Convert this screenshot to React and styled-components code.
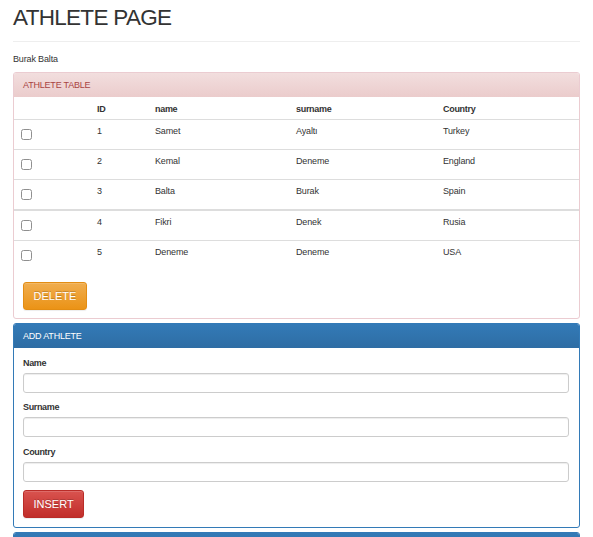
import styled, { createGlobalStyle } from "styled-components";

const GlobalStyle = createGlobalStyle`
  * {
    box-sizing: border-box;
  }
  body {
    margin: 0;
    background: #fff;
    color: #333;
    font-family: "Liberation Sans", Arial, Helvetica, sans-serif;
    font-size: 9px;
    line-height: 13.4px;
    letter-spacing: -0.15px;
  }
`;

const athletes = [
  { id: 1, name: "Samet", surname: "Ayaltı", country: "Turkey" },
  { id: 2, name: "Kemal", surname: "Deneme", country: "England" },
  { id: 3, name: "Balta", surname: "Burak", country: "Spain" },
  { id: 4, name: "Fikri", surname: "Denek", country: "Rusia", thick: true },
  { id: 5, name: "Deneme", surname: "Deneme", country: "USA" },
];

const fields = ["Name", "Surname", "Country"];

const App = () => {
  return (
    <>
      <GlobalStyle />
      <Container>
        <PageHeader>
          <Title>ATHLETE PAGE</Title>
        </PageHeader>
        <UserName>Burak Balta</UserName>

        <Panel $variant="danger">
          <PanelHeading $variant="danger">ATHLETE TABLE</PanelHeading>
          <HeadRow>
            <HeadCell />
            <HeadCell>ID</HeadCell>
            <HeadCell>name</HeadCell>
            <HeadCell>surname</HeadCell>
            <HeadCell>Country</HeadCell>
          </HeadRow>
          {athletes.map((a) => (
            <Row key={a.id} $thick={a.thick}>
              <Cell>
                <Check type="checkbox" />
              </Cell>
              <Cell>{a.id}</Cell>
              <Cell>{a.name}</Cell>
              <Cell>{a.surname}</Cell>
              <Cell>{a.country}</Cell>
            </Row>
          ))}
          <TableFooter>
            <Button $variant="warning">DELETE</Button>
          </TableFooter>
        </Panel>

        <Panel $variant="primary">
          <PanelHeading $variant="primary">ADD ATHLETE</PanelHeading>
          <FormBody>
            {fields.map((f) => (
              <FormGroup key={f}>
                <Label>{f}</Label>
                <Input type="text" />
              </FormGroup>
            ))}
            <Button $variant="danger">INSERT</Button>
          </FormBody>
        </Panel>

        <Panel $variant="primary">
          <PanelHeading $variant="primary">&nbsp;</PanelHeading>
          <FormBody />
        </Panel>
      </Container>
    </>
  );
};

export default App;

const Container = styled.div`
  margin: 0 13px;
`;

const PageHeader = styled.div`
  padding: 5px 0 10px;
  border-bottom: 1px solid #eee;
`;

const Title = styled.h1`
  margin: 0;
  font-size: 22.5px;
  line-height: 26px;
  font-weight: 400;
  letter-spacing: -0.7px;
  color: #333;
`;

const UserName = styled.p`
  margin: 11px 0 5.6px;
`;

const panelColors = {
  danger: {
    border: "#ebccd1",
    from: "#f2dede",
    to: "#ebcccc",
    text: "#a94442",
  },
  primary: {
    border: "#337ab7",
    from: "#337ab7",
    to: "#2e6da4",
    text: "#fff",
  },
};

const Panel = styled.div`
  border: 1px solid ${(p) => panelColors[p.$variant].border};
  border-radius: 3px;
  margin-bottom: 4px;
  overflow: hidden;
  background: #fff;
`;

const PanelHeading = styled.div`
  padding: 5px 9px;
  line-height: 14px;
  font-size: 9px;
  letter-spacing: -0.2px;
  color: ${(p) => panelColors[p.$variant].text};
  background: linear-gradient(
    to bottom,
    ${(p) => panelColors[p.$variant].from} 0%,
    ${(p) => panelColors[p.$variant].to} 100%
  );
`;

const columns = "78px 58px 141px 147px 1fr";

const HeadRow = styled.div`
  display: grid;
  grid-template-columns: ${columns};
  height: 22px;
`;

const HeadCell = styled.div`
  padding: 5.5px 5px 0;
  font-weight: 700;
  letter-spacing: -0.3px;
`;

const Row = styled.div`
  display: grid;
  grid-template-columns: ${columns};
  height: ${(p) => (p.$thick ? "31px" : "30px")};
  border-top: ${(p) => (p.$thick ? "2px" : "1px")} solid #ddd;
`;

const Cell = styled.div`
  padding: 5px 5px 0;
`;

const Check = styled.input`
  appearance: none;
  display: block;
  width: 11px;
  height: 11px;
  margin: 4px 0 0 1.5px;
  border: 1px solid #8f8f8f;
  border-radius: 2.5px;
  background: #fff;
`;

const TableFooter = styled.div`
  padding: 12px 9px 8px;
`;

const buttonColors = {
  warning: { from: "#f0ad4e", to: "#eb9316", border: "#e38d13" },
  danger: { from: "#d9534f", to: "#c12e2a", border: "#b92c28" },
};

const Button = styled.button`
  display: block;
  height: 28px;
  padding: 0 9.5px;
  border: 1px solid ${(p) => buttonColors[p.$variant].border};
  border-radius: 3px;
  background: linear-gradient(
    to bottom,
    ${(p) => buttonColors[p.$variant].from} 0%,
    ${(p) => buttonColors[p.$variant].to} 100%
  );
  color: #fff;
  font-family: "Liberation Sans", Arial, sans-serif;
  font-size: 11px;
  line-height: 16px;
  text-shadow: 0 -1px 0 rgba(0, 0, 0, 0.2);
  box-shadow: inset 0 1px 0 rgba(255, 255, 255, 0.15),
    0 1px 1px rgba(0, 0, 0, 0.075);
`;

const FormBody = styled.div`
  padding: 9px 10px 9px 9px;
`;

const FormGroup = styled.div`
  margin-bottom: 8.5px;
`;

const Label = styled.label`
  display: block;
  font-weight: 700;
  letter-spacing: -0.35px;
  margin-bottom: 2.5px;
`;

const Input = styled.input`
  display: block;
  width: 100%;
  height: 20px;
  padding: 0 8px;
  border: 1px solid #ccc;
  border-radius: 3px;
  box-shadow: inset 0 1px 1px rgba(0, 0, 0, 0.075);
  font-family: "Liberation Sans", Arial, sans-serif;
  font-size: 9px;
`;
